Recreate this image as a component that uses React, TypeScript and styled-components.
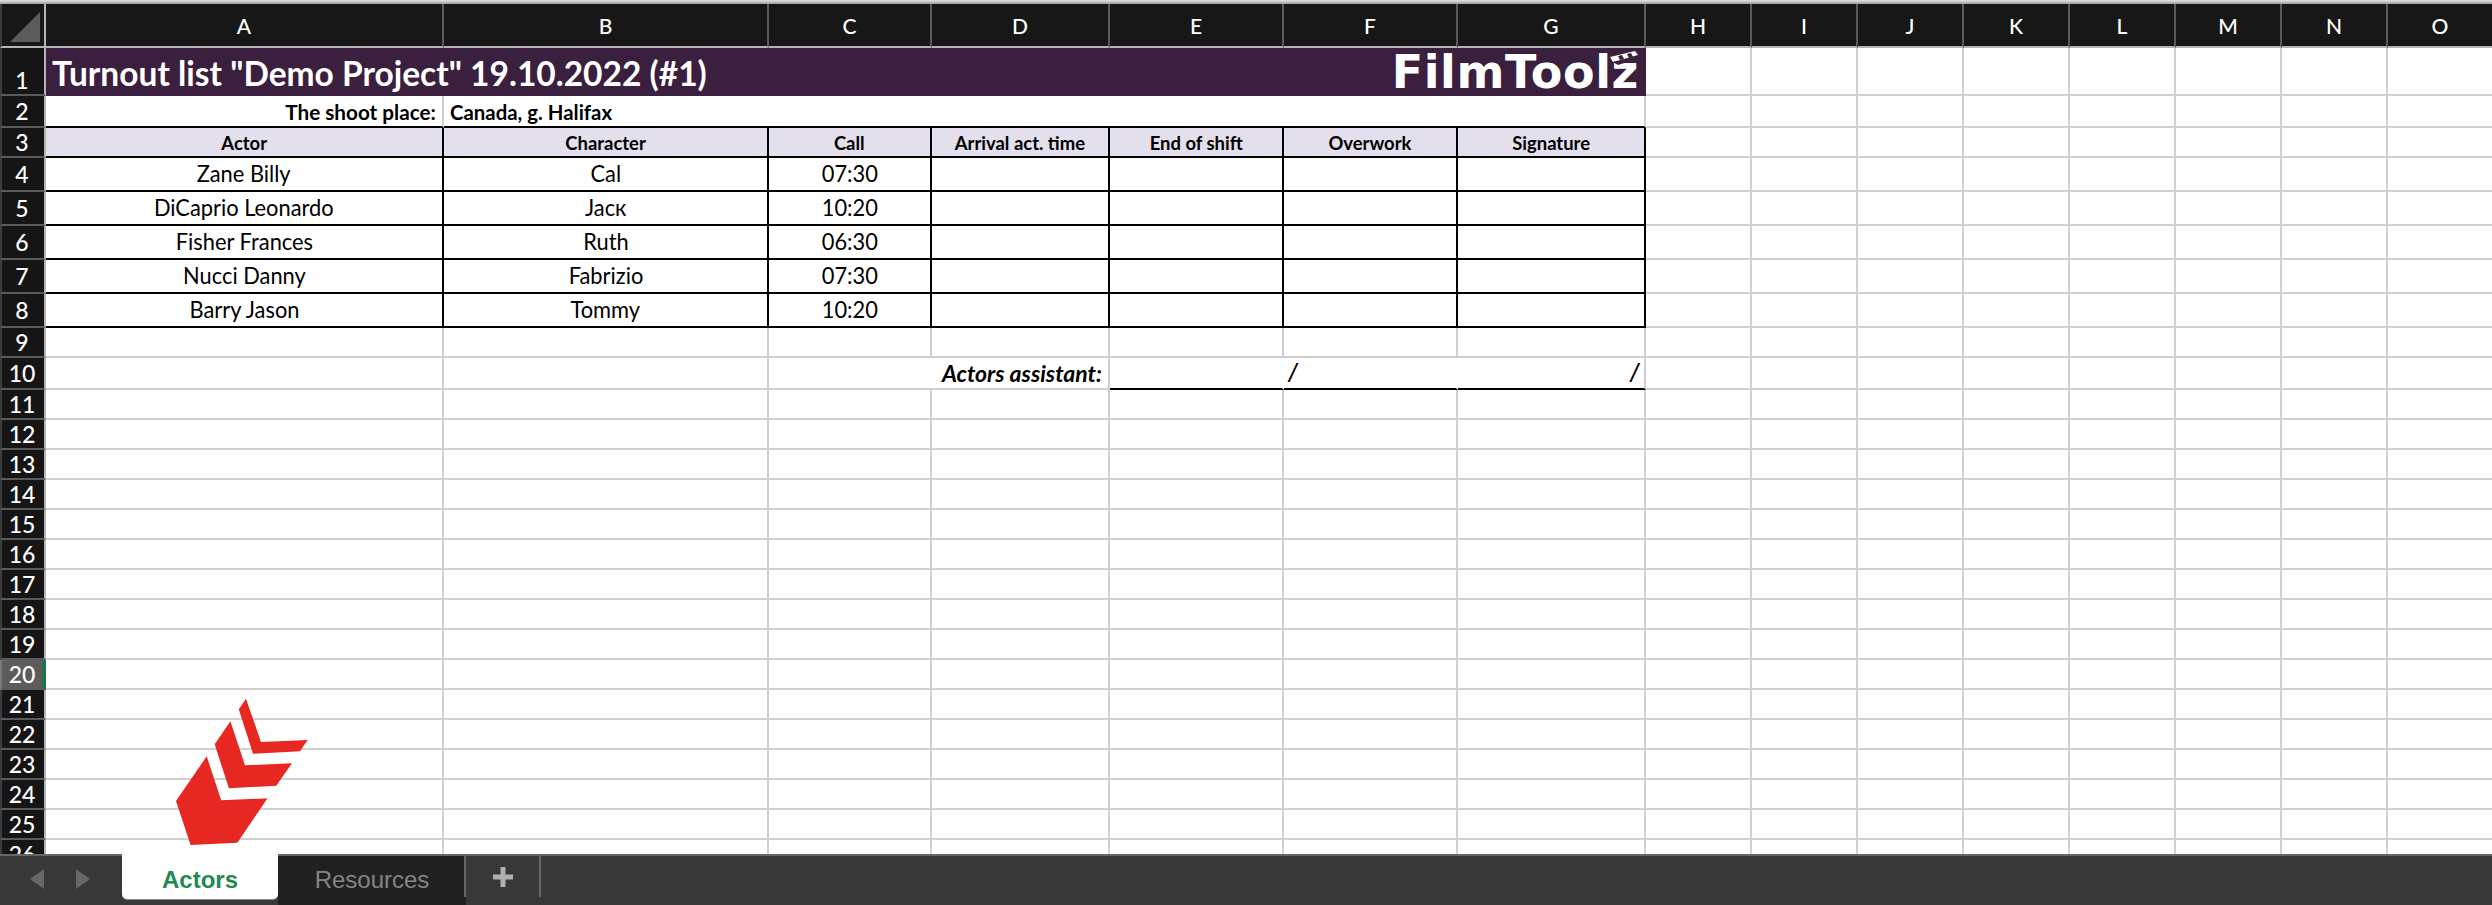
import React from "react";
import styled, { createGlobalStyle } from "styled-components";

const Global = createGlobalStyle`
  html, body { margin: 0; padding: 0; background: #fff; overflow: hidden; }
  * { box-sizing: border-box; }
`;

const GRID = "#d0d0d0";
const INK = "#000";
const columns = ["A", "B", "C", "D", "E", "F", "G", "H", "I", "J", "K", "L", "M", "N", "O"];
const colSizes = "46px 398px 325px 163px 178px 174px 174px 188px repeat(8, 106px)";
const rowHeights = [48, 32, 30, 34, 34, 34, 34, 34, 30, 32, ...Array(16).fill(30)];
const rowSizes = `44px ${rowHeights.map((h) => `${h}px`).join(" ")}`;

const Page = styled.div`
  width: 2492px;
  height: 905px;
  display: flex;
  flex-direction: column;
  overflow: hidden;
  position: relative;
  background: #fff;
  font-family: Lato, "Liberation Sans", sans-serif;
`;
const TopStrip = styled.div`
  height: 4px;
  flex: none;
  background: linear-gradient(#e4e4e4, #9c9c9c);
`;
const Sheet = styled.div`
  flex: 1;
  min-height: 0;
  overflow: hidden;
  display: grid;
  grid-template-columns: ${colSizes};
  grid-template-rows: ${rowSizes};
`;
const Corner = styled.div`
  background: #171717;
  border-right: 2px solid #b4b4b4;
  border-bottom: 2px solid #b4b4b4;
  border-left: 2px solid #3c3c3c;
  &::after {
    content: "";
    display: block;
    width: 30px;
    height: 30px;
    margin: 8px 0 0 8px;
    background: #5c5c5c;
    clip-path: polygon(100% 0, 100% 100%, 0 100%);
  }
`;
const ColHead = styled.div`
  background: #171717;
  color: #fff;
  border-right: 2px solid #5a5a5a;
  border-bottom: 2px solid #b4b4b4;
  display: flex;
  align-items: center;
  justify-content: center;
  font-size: 21px;
  font-weight: 500;
`;
const RowHead = styled.div<{ $active?: boolean; $low?: boolean }>`
  background: ${(p) => (p.$active ? "#5c5c5c" : "#151515")};
  color: #fff;
  border-left: 2px solid ${(p) => (p.$active ? "#7a7a7a" : "#3c3c3c")};
  border-right: ${(p) => (p.$active ? "4px solid #217346" : "2px solid #b4b4b4")};
  border-bottom: 2px solid #5a5a5a;
  display: flex;
  align-items: ${(p) => (p.$low ? "flex-end" : "center")};
  justify-content: center;
  padding-right: ${(p) => (p.$active ? "0" : "2px")};
  font-size: 23px;
  font-weight: 500;
`;

type Edge = "grid" | "ink" | "none";
const edgeColor = (e: Edge = "grid") => (e === "ink" ? INK : e === "none" ? "transparent" : GRID);

const Cell = styled.div<{
  $r?: Edge;
  $b?: Edge;
  $span?: number;
  $fill?: string;
  $align?: "left" | "center" | "right";
}>`
  grid-column: span ${(p) => p.$span ?? 1};
  background: ${(p) => p.$fill ?? "#fff"};
  border-right: 2px solid ${(p) => edgeColor(p.$r)};
  border-bottom: 2px solid ${(p) => edgeColor(p.$b)};
  display: flex;
  align-items: center;
  justify-content: ${(p) =>
    p.$align === "left" ? "flex-start" : p.$align === "right" ? "flex-end" : "center"};
  padding: 0 6px;
  min-width: 0;
  white-space: nowrap;
  color: #000;
`;

const Squeezed = styled.span<{ $origin?: string }>`
  display: inline-block;
  transform: scaleX(var(--sx, 0.86));
  transform-origin: ${(p) => p.$origin ?? "center"};
`;
const BodyText = styled(Squeezed)`
  font-size: 24px;
  line-height: 28px;
  margin-top: -2px;
  --sx: 0.91;
`;
const HeadText = styled(Squeezed)`
  font-size: 19.5px;
  font-weight: 700;
  --sx: 0.945;
`;
const PlaceText = styled(Squeezed)<{ $sx: number }>`
  font-size: 21px;
  font-weight: 700;
  --sx: ${(p) => p.$sx};
`;
const AssistantText = styled(Squeezed)`
  font-size: 23px;
  font-weight: 700;
  font-style: italic;
  --sx: 1;
`;
const SlashText = styled.span<{ $nudge: number }>`
  font-size: 26px;
  font-family: "Liberation Sans", sans-serif;
  font-style: italic;
  margin-left: ${(p) => p.$nudge}px;
`;

const TitleCell = styled.div`
  grid-column: span 7;
  background: #3a1f3e;
  display: flex;
  align-items: center;
  justify-content: space-between;
  padding: 0 0 0 6px;
  color: #fff;
`;
const TitleText = styled(Squeezed)`
  font-size: 35px;
  font-weight: 700;
  --sx: 0.957;
`;
const Logo = styled.div`
  position: relative;
  font-family: "DejaVu Sans", sans-serif;
  font-weight: 700;
  font-size: 46px;
  line-height: 48px;
  letter-spacing: 0.6px;
  color: #fff;
  padding-right: 7px;
`;
const Clapper = styled.svg`
  position: absolute;
  right: 6px;
  top: 3px;
`;

const Chevrons = styled.svg`
  position: absolute;
  left: 170px;
  top: 692px;
`;

const TabBar = styled.div`
  flex: none;
  height: 51px;
  background: #383838;
  border-top: 2px solid #666;
  display: flex;
  position: relative;
`;
const NavArea = styled.div`
  width: 122px;
  display: flex;
  align-items: center;
  gap: 32px;
  padding: 0 0 4px 30px;
`;
const NavArrow = styled.svg`
  display: block;
`;
const ActiveTab = styled.div`
  width: 156px;
  height: 45px;
  margin-top: -2px;
  background: #fff;
  border-radius: 0 0 5px 5px;
  box-shadow: 0 1px 0 #8a8a8a;
  color: #1f8a50;
  font: 700 24px "Liberation Sans", Arial, sans-serif;
  display: flex;
  align-items: center;
  justify-content: center;
  padding-top: 6px;
`;
const IdleTab = styled.div`
  width: 188px;
  background: #212121;
  color: #848484;
  font: 400 24px "Liberation Sans", Arial, sans-serif;
  display: flex;
  align-items: flex-start;
  justify-content: center;
  padding-top: 10px;
  position: relative;
  &::after {
    content: "";
    position: absolute;
    right: 0;
    top: 0;
    height: 41px;
    width: 2px;
    background: #666;
  }
`;
const AddTab = styled.div`
  width: 75px;
  height: 41px;
  border-right: 2px solid #666;
  display: flex;
  align-items: center;
  justify-content: center;
`;

const people = [
  ["Zane Billy", "Cal", "07:30"],
  ["DiCaprio Leonardo", "Jaск", "10:20"],
  ["Fisher Frances", "Ruth", "06:30"],
  ["Nucci Danny", "Fabrizio", "07:30"],
  ["Barry Jason", "Tommy", "10:20"],
];
const headers = ["Actor", "Character", "Call", "Arrival act. time", "End of shift", "Overwork", "Signature"];

const Blank = ({ n }: { n: number }) => (
  <>
    {Array.from({ length: n }, (_, i) => (
      <Cell key={i} />
    ))}
  </>
);

const sheetRows: React.ReactNode[] = [
  <React.Fragment key="1">
    <TitleCell>
      <TitleText $origin="left">Turnout list "Demo Project" 19.10.2022 (#1)</TitleText>
      <Logo>
        FilmToolz
        <Clapper width="30" height="14" viewBox="0 0 30 14">
          <polygon points="0,6 25,0 28,4 3,11" fill="#fff" />
          <polygon points="8,5 12,4 14,8 10,9" fill="#3a1f3e" />
          <polygon points="17,3 21,2 23,6 19,7" fill="#3a1f3e" />
          <polygon points="3,11 22,7 24,9 8,14" fill="#3a1f3e" />
        </Clapper>
      </Logo>
    </TitleCell>
    <Blank n={8} />
  </React.Fragment>,
  <React.Fragment key="2">
    <Cell $align="right" $b="ink">
      <PlaceText $origin="right" $sx={0.985}>The shoot place:</PlaceText>
    </Cell>
    <Cell $span={6} $align="left" $b="ink" $r="grid">
      <PlaceText $origin="left" $sx={0.97}>Canada, g. Halifax</PlaceText>
    </Cell>
    <Blank n={8} />
  </React.Fragment>,
  <React.Fragment key="3">
    {headers.map((h) => (
      <Cell key={h} $fill="#e3dfec" $r="ink" $b="ink">
        <HeadText>{h}</HeadText>
      </Cell>
    ))}
    <Blank n={8} />
  </React.Fragment>,
  ...people.map((p) => (
    <React.Fragment key={p[0]}>
      {p.map((t) => (
        <Cell key={t} $r="ink" $b="ink">
          <BodyText>{t}</BodyText>
        </Cell>
      ))}
      {[0, 1, 2, 3].map((i) => (
        <Cell key={i} $r="ink" $b="ink" />
      ))}
      <Blank n={8} />
    </React.Fragment>
  )),
  <React.Fragment key="9">
    <Blank n={15} />
  </React.Fragment>,
  <React.Fragment key="10">
    <Blank n={2} />
    <Cell $span={2} $align="right">
      <AssistantText $origin="right">Actors assistant:</AssistantText>
    </Cell>
    <Cell $r="none" $b="ink" />
    <Cell $r="none" $b="ink" $align="left">
      <SlashText $nudge={-1}>/</SlashText>
    </Cell>
    <Cell $b="ink" $align="right">
      <SlashText $nudge={0}>/</SlashText>
    </Cell>
    <Blank n={8} />
  </React.Fragment>,
];

export default function App() {
  return (
    <Page>
      <Global />
      <TopStrip />
      <Sheet>
        <Corner />
        {columns.map((c) => (
          <ColHead key={c}>{c}</ColHead>
        ))}
        {rowHeights.map((_, i) => (
          <React.Fragment key={i}>
            <RowHead $active={i === 19} $low={i === 0}>
              {i + 1}
            </RowHead>
            {sheetRows[i] ?? <Blank n={15} />}
          </React.Fragment>
        ))}
      </Sheet>
      <Chevrons width="140" height="160" viewBox="170 692 140 160">
        <g fill="#e62722">
          <polygon points="246,698.7 261,742 307.7,740 300,751.3 253,753.7 238.8,709.3" />
          <polygon points="230.4,721.3 245,765.3 292,763.3 276.3,785.7 228.9,788.3 214.7,744.3" />
          <polygon points="206.7,756.3 221.2,800.3 267.5,798.3 237.3,842.7 190.6,845 176,801" />
        </g>
      </Chevrons>
      <TabBar>
        <NavArea>
          <NavArrow width="14" height="20" viewBox="0 0 14 20">
            <polygon points="14,0 14,20 0,10" fill="#666" />
          </NavArrow>
          <NavArrow width="14" height="20" viewBox="0 0 14 20">
            <polygon points="0,0 0,20 14,10" fill="#666" />
          </NavArrow>
        </NavArea>
        <ActiveTab>Actors</ActiveTab>
        <IdleTab>Resources</IdleTab>
        <AddTab>
          <svg width="20" height="20" viewBox="0 0 20 20">
            <path d="M10 0v20M0 10h20" stroke="#b0b0b0" strokeWidth="5" />
          </svg>
        </AddTab>
      </TabBar>
    </Page>
  );
}
